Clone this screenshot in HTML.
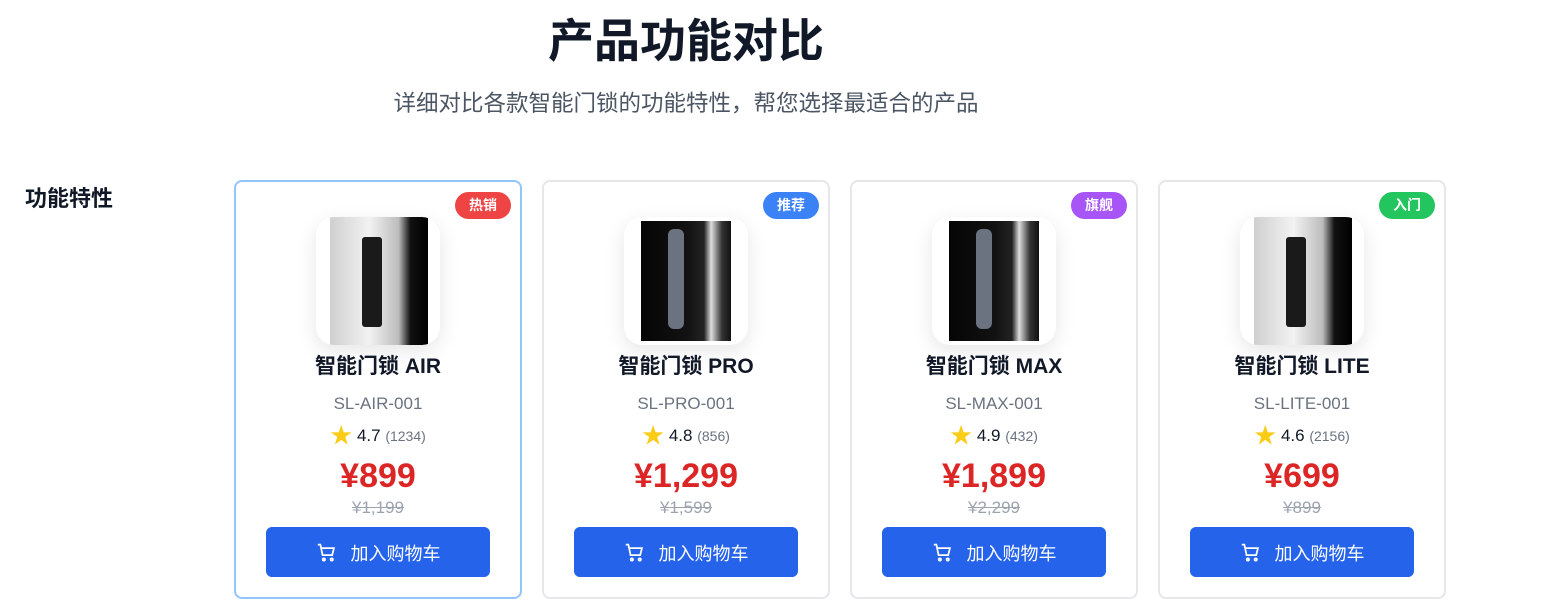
<!DOCTYPE html>
<html><head><meta charset="utf-8"><style>
*{margin:0;padding:0;box-sizing:border-box}
body{width:1544px;height:613px;background:#fff;font-family:"Liberation Sans","Noto Sans CJK SC",sans-serif;position:relative;overflow:hidden;color:#111827}
h1{position:absolute;left:0;width:1372px;top:13px;text-align:center;font-size:46px;font-weight:700;color:#111827;line-height:56px}
.sub{position:absolute;left:0;width:1372px;top:90px;text-align:center;font-size:22.5px;color:#4b5563;line-height:28px}
.feat{position:absolute;left:25px;top:185px;font-size:22px;font-weight:700;line-height:28px}
.card{position:absolute;top:180px;width:288px;height:419px;border:2px solid #e5e7eb;border-radius:8px;background:#fff}
.card.sel{border-color:#93c5fd}
.badge{position:absolute;right:9px;top:10px;height:27px;padding:0 14px;border-radius:14px;color:#fff;font-size:14px;font-weight:700;line-height:27px}
.img{position:absolute;left:80px;top:35px;width:124px;height:128px;border-radius:18px;background:#fff;box-shadow:0 6px 20px rgba(0,0,0,.10);overflow:hidden}
.ph{position:absolute;top:0;height:128px}
.t{position:absolute;left:0;right:0;top:171px;text-align:center;font-size:21px;font-weight:700;line-height:28px}
.c{position:absolute;left:0;right:0;top:211px;text-align:center;font-size:17px;color:#6b7280;line-height:22px}
.r{position:absolute;left:0;right:0;top:243px;text-align:center;font-size:17px;line-height:22px}
.r small{font-size:14px;color:#6b7280}
.star{color:#facc15;font-size:22px;vertical-align:-2px}
.p{position:absolute;left:0;right:0;top:274px;text-align:center;font-size:34px;font-weight:700;color:#dc2626;line-height:40px}
.o{position:absolute;left:0;right:0;top:316px;text-align:center;font-size:17px;color:#9ca3af;text-decoration:line-through;line-height:20px}
.btn{position:absolute;left:30px;top:345px;width:224px;height:50px;border-radius:6px;background:#2563eb;color:#fff;font-size:18px;line-height:54px;text-align:center}
.btn svg{vertical-align:-3px;margin-right:14px}
</style></head><body>
<h1>产品功能对比</h1>
<div class="sub">详细对比各款智能门锁的功能特性，帮您选择最适合的产品</div>
<div class="feat">功能特性</div>

<div class="card sel" style="left:234px">
<div class="badge" style="background:#ef4444">热销</div>
<div class="img"><div class="ph" style="left:14px;width:98px;background:linear-gradient(90deg,#cfcfcf,#f2f2f2 40%,#bdbdbd 70%,#111 82%,#000)"></div><div class="ph" style="left:46px;top:20px;height:90px;width:20px;background:#1a1a1a;border-radius:3px"></div></div>
<div class="t">智能门锁 AIR</div><div class="c">SL-AIR-001</div>
<div class="r"><span class="star">★</span> 4.7 <small>(1234)</small></div>
<div class="p">¥899</div><div class="o">¥1,199</div>
<div class="btn"><svg width="21" height="21" viewBox="0 0 24 24" fill="none" stroke="#fff" stroke-width="2"><path d="M2 3h3l2.5 12h11l2-8H6.5"/><circle cx="9" cy="20" r="1.3"/><circle cx="18" cy="20" r="1.3"/></svg>加入购物车</div>
</div>

<div class="card" style="left:542px">
<div class="badge" style="background:#3b82f6">推荐</div>
<div class="img"><div class="ph" style="left:17px;width:90px;top:4px;height:120px;background:linear-gradient(90deg,#050505,#111 50%,#222 70%,#ddd 78%,#333 90%,#111)"></div><div class="ph" style="left:44px;top:12px;height:100px;width:16px;background:#6b7280;border-radius:6px"></div></div>
<div class="t">智能门锁 PRO</div><div class="c">SL-PRO-001</div>
<div class="r"><span class="star">★</span> 4.8 <small>(856)</small></div>
<div class="p">¥1,299</div><div class="o">¥1,599</div>
<div class="btn"><svg width="21" height="21" viewBox="0 0 24 24" fill="none" stroke="#fff" stroke-width="2"><path d="M2 3h3l2.5 12h11l2-8H6.5"/><circle cx="9" cy="20" r="1.3"/><circle cx="18" cy="20" r="1.3"/></svg>加入购物车</div>
</div>

<div class="card" style="left:850px">
<div class="badge" style="background:#a855f7">旗舰</div>
<div class="img"><div class="ph" style="left:17px;width:90px;top:4px;height:120px;background:linear-gradient(90deg,#050505,#111 50%,#222 70%,#ddd 78%,#333 90%,#111)"></div><div class="ph" style="left:44px;top:12px;height:100px;width:16px;background:#6b7280;border-radius:6px"></div></div>
<div class="t">智能门锁 MAX</div><div class="c">SL-MAX-001</div>
<div class="r"><span class="star">★</span> 4.9 <small>(432)</small></div>
<div class="p">¥1,899</div><div class="o">¥2,299</div>
<div class="btn"><svg width="21" height="21" viewBox="0 0 24 24" fill="none" stroke="#fff" stroke-width="2"><path d="M2 3h3l2.5 12h11l2-8H6.5"/><circle cx="9" cy="20" r="1.3"/><circle cx="18" cy="20" r="1.3"/></svg>加入购物车</div>
</div>

<div class="card" style="left:1158px">
<div class="badge" style="background:#22c55e">入门</div>
<div class="img"><div class="ph" style="left:14px;width:98px;background:linear-gradient(90deg,#cfcfcf,#f2f2f2 40%,#bdbdbd 70%,#111 82%,#000)"></div><div class="ph" style="left:46px;top:20px;height:90px;width:20px;background:#1a1a1a;border-radius:3px"></div></div>
<div class="t">智能门锁 LITE</div><div class="c">SL-LITE-001</div>
<div class="r"><span class="star">★</span> 4.6 <small>(2156)</small></div>
<div class="p">¥699</div><div class="o">¥899</div>
<div class="btn"><svg width="21" height="21" viewBox="0 0 24 24" fill="none" stroke="#fff" stroke-width="2"><path d="M2 3h3l2.5 12h11l2-8H6.5"/><circle cx="9" cy="20" r="1.3"/><circle cx="18" cy="20" r="1.3"/></svg>加入购物车</div>
</div>
</body></html>
